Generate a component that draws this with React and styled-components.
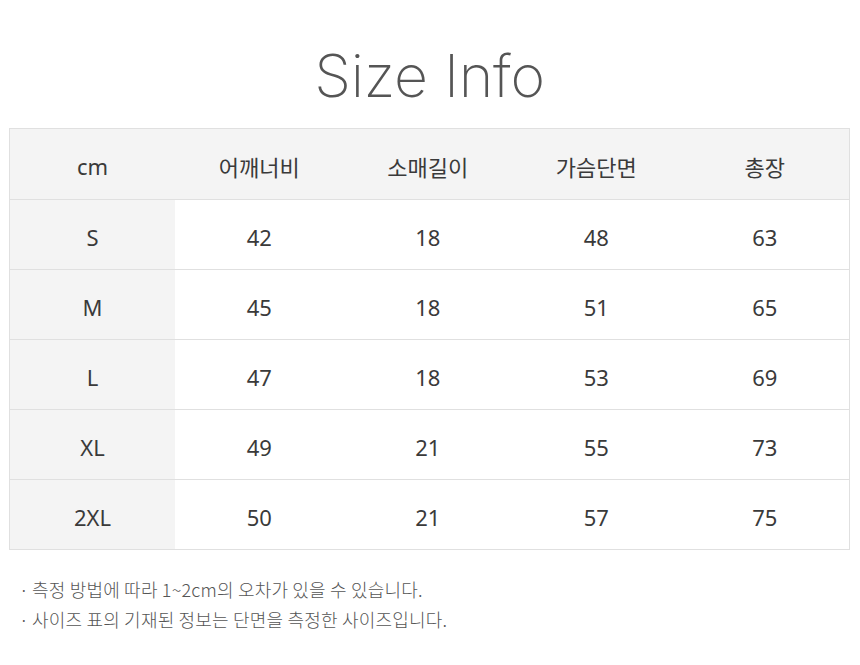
import React from 'react';
import styled, { createGlobalStyle } from 'styled-components';

const GlobalStyle = createGlobalStyle`
  body {
    margin: 0;
    background: #fff;
    font-family: "Noto Sans CJK KR", "Noto Sans", sans-serif;
  }
`;

const headers = ['cm', '어깨너비', '소매길이', '가슴단면', '총장'];

const rows = [
  ['S', 42, 18, 48, 63],
  ['M', 45, 18, 51, 65],
  ['L', 47, 18, 53, 69],
  ['XL', 49, 21, 55, 73],
  ['2XL', 50, 21, 57, 75],
];

const notes = [
  '측정 방법에 따라 1~2cm의 오차가 있을 수 있습니다.',
  '사이즈 표의 기재된 정보는 단면을 측정한 사이즈입니다.',
];

export default function App() {
  return (
    <Page>
      <GlobalStyle />
      <Title>Size Info</Title>
      <Table>
        <Row header>
          {headers.map((h) => (
            <Cell key={h} shaded>{h}</Cell>
          ))}
        </Row>
        {rows.map((r) => (
          <Row key={r[0]}>
            {r.map((v, i) => (
              <Cell key={i} shaded={i === 0}>{v}</Cell>
            ))}
          </Row>
        ))}
      </Table>
      <Notes>
        {notes.map((n) => (
          <Note key={n}>{n}</Note>
        ))}
      </Notes>
    </Page>
  );
}

const Page = styled.div`
  width: 860px;
  padding: 42px 10px 0 9px;
  box-sizing: border-box;
`;

const Title = styled.h1`
  margin: 0 0 19px;
  text-align: center;
  font-family: "Inter", "Lato", sans-serif;
  font-weight: 200;
  font-size: 59px;
  line-height: 67px;
  color: #555;
  letter-spacing: -0.3px;
`;

const Table = styled.div`
  border: 1px solid #e0e0e0;
`;

const Row = styled.div`
  display: grid;
  grid-template-columns: 165px repeat(4, 1fr);
  height: ${(p) => (p.header ? '70px' : '69px')};
  border-bottom: 1px solid #e0e0e0;
  background: ${(p) => (p.header ? '#f4f4f4' : '#fff')};

  &:last-child {
    border-bottom: none;
  }
`;

const Cell = styled.div`
  display: flex;
  align-items: center;
  justify-content: center;
  padding-top: 4px;
  font-family: "Noto Sans", "Noto Sans CJK KR", sans-serif;
  font-size: 22px;
  color: #3a3a3a;
  background: ${(p) => (p.shaded ? '#f4f4f4' : 'transparent')};
`;

const Notes = styled.ul`
  list-style: none;
  margin: 24px 0 0;
  padding: 0 0 0 10px;
`;

const Note = styled.li`
  font-family: "Noto Sans CJK KR", sans-serif;
  font-weight: 300;
  font-size: 18px;
  line-height: 30px;
  color: #555;
  letter-spacing: 0.2px;

  &::before {
    content: '·';
    margin-right: 3px;
  }
`;
